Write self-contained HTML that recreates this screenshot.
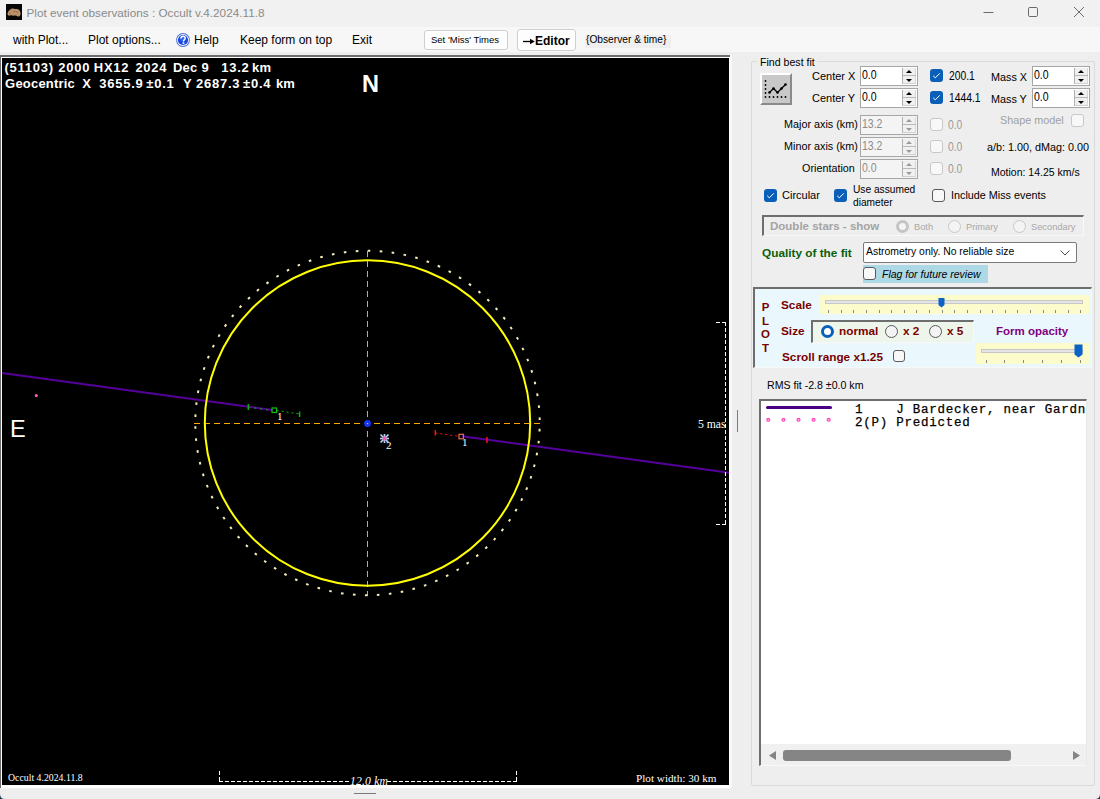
<!DOCTYPE html>
<html><head><meta charset="utf-8">
<style>
*{margin:0;padding:0;box-sizing:border-box}
html,body{width:1100px;height:799px;overflow:hidden;background:#eeeeee;font-family:"Liberation Sans",sans-serif;position:relative}
.a{position:absolute;white-space:pre;line-height:1}
#title{left:0;top:0;width:1100px;height:27px;background:#f1f1f1}
#menu{left:0;top:27px;width:1100px;height:25px;background:#f7f7f7}
.mi{font-size:12px;color:#000;top:33.5px}
.btn{background:#fdfdfd;border:1px solid #cfcfcf;border-radius:3px}
#plot{left:0;top:55px;width:732px;height:733px;background:#fff;border-top:2px solid #6d6d6d;border-left:1px solid #6d6d6d}
#blk{left:2px;top:58px;width:727px;height:727px;background:#000}
.hd{font-size:13px;font-weight:bold;color:#fff}
.sf{font-family:"Liberation Serif",serif;color:#fff}
.ps{font-size:11px;color:#000}
.sp{border:1px solid #a6a6a6}
.spb{width:14px;height:16px;background:#f0f0f0;border-left:1px solid #b0b0b0;border-right:1px solid #d8d8d8;border-bottom:1px solid #d0d0d0}
.spb:after{content:"";position:absolute;left:0;top:7px;width:13px;height:1px;background:#b8b8b8}
.tri-u{width:0;height:0;border-left:3.5px solid transparent;border-right:3.5px solid transparent;border-bottom:3.5px solid #000}
.tri-d{width:0;height:0;border-left:3.5px solid transparent;border-right:3.5px solid transparent;border-top:3.5px solid #000}
.ck{width:13px;height:13px;background:#0a5fb8;border-radius:3px}
.ck svg{position:absolute;left:0;top:0}
.cku{width:13px;height:13px;background:#f8f8f8;border:1px solid #5a5a5a;border-radius:3px}
.rad{width:13px;height:13px;border-radius:50%}
</style></head><body>
<div class="a" id="title"></div>
<div class="a" id="menu"></div>
<svg class="a" style="left:975px;top:0" width="125" height="27">
 <path d="M8.5,12.5 H18.5" stroke="#6a6a6a" stroke-width="1"/>
 <rect x="53.5" y="7.5" width="9" height="9" rx="1.2" fill="none" stroke="#6a6a6a" stroke-width="1"/>
 <path d="M99,7 L109,17 M109,7 L99,17" stroke="#6a6a6a" stroke-width="1"/>
</svg>
<svg class="a" style="left:6px;top:4px" width="16" height="16" viewBox="0 0 16 16"><rect width="16" height="16" fill="#080604"/>
<path d="M1.5,9.5 C2,7 4,5.5 6,4.5 C7.5,4 8.5,5.5 10,5 C12,4.5 14,6 14.5,8.5 C15,10.5 14,12.5 12.5,12.5 C11,12.5 10.5,11 9,11.5 C7,12 5.5,11 4,11.5 C2.5,12 1.3,11 1.5,9.5 Z" fill="#b49468"/>
<circle cx="8.5" cy="7.5" r="0.8" fill="#c05050"/><circle cx="11" cy="8" r="0.8" fill="#c05050"/><circle cx="4" cy="9.5" r="0.8" fill="#c06050"/></svg>
<svg class="a" style="left:176px;top:33px" width="14" height="14" viewBox="0 0 14 14"><circle cx="7" cy="7" r="6.9" fill="#4a68d8"/><circle cx="7" cy="7" r="6.0" fill="#f4f8ff"/><circle cx="7" cy="7" r="5.1" fill="#1846e0"/><circle cx="6" cy="5.5" r="2.5" fill="#3a70ff" opacity="0.6"/>
<path d="M4.9,5.4 C4.9,4 5.9,3.3 7.1,3.3 C8.3,3.3 9.2,4.1 9.2,5.2 C9.2,6.6 7.4,6.8 7.4,8.4" fill="none" stroke="#fff" stroke-width="1.5"/><rect x="6.6" y="9.3" width="1.7" height="1.6" fill="#fff"/></svg>
<div class="a" style="left:26.5px;top:6.5px;font-size:11.75px;color:#8a8a8a">Plot event observations : Occult v.4.2024.11.8</div>
<div class="a mi" style="left:13px">with Plot...</div>
<div class="a mi" style="left:88px">Plot options...</div>
<div class="a mi" style="left:194px">Help</div>
<div class="a mi" style="left:240px">Keep form on top</div>
<div class="a mi" style="left:352px">Exit</div>
<div class="a btn" style="left:424px;top:30px;width:84px;height:20px"></div>
<div class="a" style="left:431px;top:35px;font-size:9.5px">Set 'Miss' Times</div>
<div class="a btn" style="left:517px;top:29px;width:59px;height:22px"></div>
<svg class="a" style="left:523px;top:38px" width="13" height="7"><path d="M0,3.5 H10" stroke="#000" stroke-width="1.3"/><path d="M7,0.8 L11.8,3.5 L7,6.2 Z" fill="#000"/></svg><div class="a" style="left:535px;top:35px;font-size:12px;font-weight:bold">Editor</div>
<div class="a" style="left:585px;top:35px;width:86px;height:13px;background:#efefef"></div><div class="a" style="left:586px;top:35px;font-size:10.2px">{Observer &amp; time}</div>

<div class="a" id="plot"></div>
<div class="a" id="blk"></div>
<svg class="a" style="left:0;top:0" width="1100" height="799" viewBox="0 0 1100 799">
 <g shape-rendering="crispEdges">
  <line x1="194" y1="423.5" x2="540" y2="423.5" stroke="#ffa500" stroke-width="1.5" stroke-dasharray="6 4"/>
  <line x1="367.5" y1="251" x2="367.5" y2="596" stroke="#ffa500" stroke-width="1.5" stroke-dasharray="5.5 4.5"/>
 </g>
 <circle cx="367.5" cy="423" r="172.2" fill="none" stroke="#f4ecb8" stroke-width="2" stroke-dasharray="2.6 9.422" stroke-dashoffset="-5.9"/>
 <line x1="2" y1="372.9" x2="273" y2="410.2" stroke="#56009c" stroke-width="2"/>
 <line x1="462" y1="436.2" x2="729" y2="472.8" stroke="#56009c" stroke-width="2"/>
 <circle cx="367.5" cy="423" r="162.7" fill="none" stroke="#ffff00" stroke-width="2"/>
  <circle cx="367.5" cy="423.5" r="3.4" fill="#1434ff"/><circle cx="367.5" cy="423.5" r="0.8" fill="#ffa500"/>
 <circle cx="36.3" cy="395.6" r="1.5" fill="#ff60c0"/>
 <!-- green -->
 <line x1="248.3" y1="404" x2="248.3" y2="410" stroke="#10b010" stroke-width="1.5"/>
 <line x1="299.6" y1="411.5" x2="299.6" y2="417" stroke="#10b010" stroke-width="1.5"/>
 <line x1="276.7" y1="410.5" x2="299.6" y2="414" stroke="#10b010" stroke-width="1" stroke-dasharray="2 3"/>
 <line x1="248.3" y1="407" x2="272" y2="410.3" stroke="#10a010" stroke-width="1.2" stroke-dasharray="2 4"/>
 <rect x="272" y="408" width="4.5" height="4.5" fill="none" stroke="#10c010" stroke-width="1.2"/>
 <!-- red -->
 <line x1="435.3" y1="430" x2="435.3" y2="435.6" stroke="#ff1010" stroke-width="1.5"/>
 <line x1="487" y1="437" x2="487" y2="443" stroke="#ff1010" stroke-width="1.5"/>
 <line x1="435.3" y1="433" x2="458.5" y2="436.3" stroke="#ff1010" stroke-width="1" stroke-dasharray="2 3"/>
 <rect x="459" y="434.3" width="4.5" height="4.5" fill="none" stroke="#e07050" stroke-width="1.2"/>
 <!-- star -->
 <g stroke="#b8d0f0" stroke-width="1.7">
  <line x1="380.5" y1="434.5" x2="388.5" y2="442.5"/><line x1="388.5" y1="434.5" x2="380.5" y2="442.5"/>
  <line x1="384.5" y1="434" x2="384.5" y2="443"/><line x1="380" y1="438.5" x2="389" y2="438.5"/>
 </g>
 <circle cx="384.5" cy="438.5" r="1.9" fill="#ff50b0"/>
 <!-- right bracket -->
 <g stroke="#fff" stroke-width="1" shape-rendering="crispEdges">
  <line x1="725.5" y1="322" x2="725.5" y2="525" stroke-dasharray="4 2"/>
  <line x1="716" y1="322.5" x2="726" y2="322.5" stroke-dasharray="4 2"/>
  <line x1="716" y1="524.5" x2="726" y2="524.5" stroke-dasharray="4 2"/>
  <line x1="219.5" y1="771" x2="219.5" y2="782" stroke-dasharray="4 2"/>
  <line x1="516.5" y1="771" x2="516.5" y2="782" stroke-dasharray="4 2"/>
  <line x1="219" y1="781.5" x2="350" y2="781.5" stroke-dasharray="4 2"/>
  <line x1="387" y1="781.5" x2="517" y2="781.5" stroke-dasharray="4 2"/>
 </g>
</svg>
<div class="a hd" style="left:4.5px;top:61px;letter-spacing:0.75px">(51103)</div><div class="a hd" style="left:58.3px;top:61px;letter-spacing:0.75px">2000</div><div class="a hd" style="left:93.8px;top:61px;letter-spacing:0.75px">HX12</div><div class="a hd" style="left:135.4px;top:61px;letter-spacing:0.75px">2024</div><div class="a hd" style="left:172.9px;top:61px;letter-spacing:0.2px">Dec</div><div class="a hd" style="left:201.5px;top:61px;letter-spacing:0.75px">9</div><div class="a hd" style="left:221.3px;top:61px;letter-spacing:0.75px">13.2</div><div class="a hd" style="left:252.0px;top:61px;letter-spacing:0.2px">km</div>

<div class="a hd" style="left:5.1px;top:77px;letter-spacing:0.2px">Geocentric</div><div class="a hd" style="left:82.2px;top:77px;letter-spacing:0.2px">X</div><div class="a hd" style="left:99.3px;top:77px;letter-spacing:0.75px">3655.9</div><div class="a hd" style="left:146.3px;top:77px;letter-spacing:0.75px">±0.1</div><div class="a hd" style="left:183.1px;top:77px;letter-spacing:0.2px">Y</div><div class="a hd" style="left:196.0px;top:77px;letter-spacing:0.75px">2687.3</div><div class="a hd" style="left:243.1px;top:77px;letter-spacing:0.75px">±0.4</div><div class="a hd" style="left:275.9px;top:77px;letter-spacing:0.2px">km</div>

<div class="a" style="left:362px;top:73px;font-size:23.5px;font-weight:bold;color:#fff">N</div>
<div class="a" style="left:10px;top:418px;font-size:23.5px;color:#fff">E</div>
<div class="a sf" style="left:277px;top:411px;font-size:11px">1</div>
<div class="a sf" style="left:462px;top:437px;font-size:11px">1</div>
<div class="a sf" style="left:386px;top:440px;font-size:11px">2</div>
<div class="a sf" style="left:698px;top:418.5px;font-size:11.7px">5 mas</div>
<div class="a sf" style="left:8px;top:773px;font-size:9.8px">Occult 4.2024.11.8</div>
<div class="a sf" style="left:636px;top:773px;font-size:11.2px">Plot width: 30 km</div>
<div class="a sf" style="left:350px;top:775.5px;font-size:11.6px;font-style:italic;letter-spacing:0.2px">12.0 km</div>

<!-- splitter grippers -->
<div class="a" style="left:737px;top:410px;width:1px;height:22px;background:#7a7a7a"></div>
<div class="a" style="left:354px;top:793px;width:22px;height:1px;background:#7a7a7a"></div>
<div class="a" style="left:730px;top:55px;width:2px;height:733px;background:#f8f8f8"></div>
<!-- outer frame -->
<div class="a" style="left:751px;top:61px;width:344px;height:725px;border:1px solid #dadada;border-radius:2px"></div>
<div class="a" style="left:757px;top:56px;width:60px;height:10px;background:#eeeeee"></div>
<div class="a ps" style="left:760px;top:57px;font-size:10.6px">Find best fit</div>
<!-- fit button -->
<div class="a" style="left:760px;top:73px;width:32px;height:32px;background:#c8c8c8;border:2px solid;border-color:#fff #8a8a8a #8a8a8a #fff"></div>
<svg class="a" style="left:760px;top:73px" width="32" height="32" viewBox="0 0 32 32">
 <g fill="#000"><circle cx="5.5" cy="8" r="0.9"/><circle cx="5.5" cy="12" r="0.9"/><circle cx="5.5" cy="16" r="0.9"/><circle cx="5.5" cy="20" r="0.9"/><circle cx="5.5" cy="24" r="0.9"/>
 <circle cx="9.5" cy="24" r="0.9"/><circle cx="13.5" cy="24" r="0.9"/><circle cx="17.5" cy="24" r="0.9"/><circle cx="21.5" cy="24" r="0.9"/><circle cx="25.5" cy="24" r="0.9"/></g>
 <polyline points="9.5,19.5 13.5,15.5 17.5,19.5 21.5,15.5 25.5,11.5" fill="none" stroke="#000" stroke-width="1.3"/>
 <g fill="#000"><circle cx="9.5" cy="19.5" r="1.3"/><circle cx="13.5" cy="15.5" r="1.3"/><circle cx="17.5" cy="19.5" r="1.3"/><circle cx="21.5" cy="15.5" r="1.3"/><circle cx="25.5" cy="11.5" r="1.3"/></g>
</svg>
<div class="a ps" style="left:812px;top:71px;font-size:11px">Center X</div>
<div class="a ps" style="left:812px;top:93px;font-size:11px">Center Y</div>
<div class="a ps" style="left:784px;top:119px;font-size:10.8px">Major axis (km)</div>
<div class="a ps" style="left:784px;top:141px;font-size:10.8px">Minor axis (km)</div>
<div class="a ps" style="left:802px;top:163px;font-size:10.8px">Orientation</div>
<div class="a sp" style="left:860px;top:66px;width:58px;height:20px;background:#fff"></div><div class="a" style="left:862px;top:69px;font-size:12.5px;transform:scaleX(0.84);transform-origin:0 0;color:#000">0.0</div><div class="a spb" style="left:902px;top:68px"></div><div class="a tri-u" style="left:906px;top:70px"></div><div class="a tri-d" style="left:906px;top:79px"></div>
<div class="a sp" style="left:1032px;top:66px;width:58px;height:20px;background:#fff"></div><div class="a" style="left:1034px;top:69px;font-size:12.5px;transform:scaleX(0.84);transform-origin:0 0;color:#000">0.0</div><div class="a spb" style="left:1074px;top:68px"></div><div class="a tri-u" style="left:1078px;top:70px"></div><div class="a tri-d" style="left:1078px;top:79px"></div>
<div class="a sp" style="left:860px;top:88px;width:58px;height:20px;background:#fff"></div><div class="a" style="left:862px;top:91px;font-size:12.5px;transform:scaleX(0.84);transform-origin:0 0;color:#000">0.0</div><div class="a spb" style="left:902px;top:90px"></div><div class="a tri-u" style="left:906px;top:92px"></div><div class="a tri-d" style="left:906px;top:101px"></div>
<div class="a sp" style="left:1032px;top:88px;width:58px;height:20px;background:#fff"></div><div class="a" style="left:1034px;top:91px;font-size:12.5px;transform:scaleX(0.84);transform-origin:0 0;color:#000">0.0</div><div class="a spb" style="left:1074px;top:90px"></div><div class="a tri-u" style="left:1078px;top:92px"></div><div class="a tri-d" style="left:1078px;top:101px"></div>
<div class="a sp" style="left:860px;top:115px;width:58px;height:20px;background:#f4f4f4"></div><div class="a" style="left:862px;top:118px;font-size:12.5px;transform:scaleX(0.84);transform-origin:0 0;color:#8c8c8c">13.2</div><div class="a spb" style="left:902px;top:117px"></div><div class="a tri-u" style="border-bottom-color:#9a9a9a;left:906px;top:119px"></div><div class="a tri-d" style="border-top-color:#9a9a9a;left:906px;top:128px"></div>
<div class="a sp" style="left:860px;top:137px;width:58px;height:20px;background:#f4f4f4"></div><div class="a" style="left:862px;top:140px;font-size:12.5px;transform:scaleX(0.84);transform-origin:0 0;color:#8c8c8c">13.2</div><div class="a spb" style="left:902px;top:139px"></div><div class="a tri-u" style="border-bottom-color:#9a9a9a;left:906px;top:141px"></div><div class="a tri-d" style="border-top-color:#9a9a9a;left:906px;top:150px"></div>
<div class="a sp" style="left:860px;top:159px;width:58px;height:20px;background:#f4f4f4"></div><div class="a" style="left:862px;top:162px;font-size:12.5px;transform:scaleX(0.84);transform-origin:0 0;color:#8c8c8c">0.0</div><div class="a spb" style="left:902px;top:161px"></div><div class="a tri-u" style="border-bottom-color:#9a9a9a;left:906px;top:163px"></div><div class="a tri-d" style="border-top-color:#9a9a9a;left:906px;top:172px"></div>
<div class="a ck" style="left:930px;top:69px"><svg width="13" height="13" viewBox="0 0 13 13"><polyline points="3.2,6.8 5.3,8.8 9.8,4.3" fill="none" stroke="#fff" stroke-width="1"/></svg></div>
<div class="a ck" style="left:930px;top:91px"><svg width="13" height="13" viewBox="0 0 13 13"><polyline points="3.2,6.8 5.3,8.8 9.8,4.3" fill="none" stroke="#fff" stroke-width="1"/></svg></div>
<div class="a" style="left:949px;top:70px;font-size:12.3px;transform:scaleX(0.84);transform-origin:0 0">200.1</div>
<div class="a" style="left:949px;top:92px;font-size:12.3px;transform:scaleX(0.84);transform-origin:0 0">1444.1</div>
<div class="a ps" style="left:991px;top:72px;font-size:10.8px">Mass X</div>
<div class="a ps" style="left:991px;top:94px;font-size:10.8px">Mass Y</div>
<div class="a cku" style="left:930px;top:118px;border-color:#c8c8c8"></div>
<div class="a" style="left:948px;top:119px;font-size:12.3px;transform:scaleX(0.84);transform-origin:0 0;color:#9a9a9a">0.0</div>
<div class="a cku" style="left:930px;top:140px;border-color:#c8c8c8"></div>
<div class="a" style="left:948px;top:141px;font-size:12.3px;transform:scaleX(0.84);transform-origin:0 0;color:#9a9a9a">0.0</div>
<div class="a cku" style="left:930px;top:162px;border-color:#c8c8c8"></div>
<div class="a" style="left:948px;top:163px;font-size:12.3px;transform:scaleX(0.84);transform-origin:0 0;color:#9a9a9a">0.0</div>
<div class="a ps" style="left:1000px;top:115px;font-size:10.8px;color:#a0a0a0">Shape model</div>
<div class="a cku" style="left:1071px;top:114px;border-color:#c8c8c8"></div>
<div class="a ps" style="left:987px;top:142px;font-size:10.8px">a/b: 1.00, dMag: 0.00</div>
<div class="a ps" style="left:991px;top:167px;font-size:10.5px">Motion: 14.25 km/s</div>
<div class="a ck" style="left:764px;top:189px"><svg width="13" height="13" viewBox="0 0 13 13"><polyline points="3.2,6.8 5.3,8.8 9.8,4.3" fill="none" stroke="#fff" stroke-width="1"/></svg></div>
<div class="a ck" style="left:834px;top:189px"><svg width="13" height="13" viewBox="0 0 13 13"><polyline points="3.2,6.8 5.3,8.8 9.8,4.3" fill="none" stroke="#fff" stroke-width="1"/></svg></div>
<div class="a cku" style="left:932px;top:189px;border-color:#5a5a5a"></div>
<div class="a ps" style="left:782px;top:190px;font-size:11px">Circular</div>
<div class="a ps" style="left:853px;top:185px;font-size:10.2px">Use assumed</div>
<div class="a ps" style="left:853px;top:198px;font-size:10.2px">diameter</div>
<div class="a ps" style="left:951px;top:190px;font-size:10.8px">Include Miss events</div>
<div class="a" style="left:762px;top:215px;width:322px;height:21px;border:2px solid;border-color:#6e6e6e #f8f8f8 #f8f8f8 #6e6e6e;border-width:2px 1px 1px 2px"></div>
<div class="a" style="left:770px;top:221px;font-size:11.5px;font-weight:bold;color:#a4a4a4">Double stars - show</div>
<div class="a rad" style="left:896px;top:220px;border:3.5px solid #c4c4c4;background:#f4f4f4"></div>
<div class="a rad" style="left:948px;top:220px;border:1px solid #c8c8c8;background:#f4f4f4"></div>
<div class="a rad" style="left:1013px;top:220px;border:1px solid #c8c8c8;background:#f4f4f4"></div>
<div class="a" style="left:914px;top:223px;font-size:9.3px;color:#a8a8a8">Both</div>
<div class="a" style="left:966px;top:223px;font-size:9.3px;color:#a8a8a8">Primary</div>
<div class="a" style="left:1031px;top:223px;font-size:9.3px;color:#a8a8a8">Secondary</div>
<div class="a" style="left:762px;top:248px;font-size:11.8px;font-weight:bold;color:#0a5e0a">Quality of the fit</div>
<div class="a" style="left:863px;top:242px;width:214px;height:21px;background:#fff;border:1px solid #7a7a7a;border-radius:2px"></div>
<div class="a ps" style="left:866px;top:247px;font-size:10.4px">Astrometry only. No reliable size</div>
<svg class="a" style="left:1060px;top:249px" width="11" height="8"><polyline points="0.5,1.5 5,6 9.5,1.5" fill="none" stroke="#505050" stroke-width="1"/></svg>
<div class="a" style="left:863px;top:265px;width:125px;height:18px;background:#add8e6"></div>
<div class="a cku" style="left:863px;top:267px;border-color:#5a5a5a"></div>
<div class="a ps" style="left:882px;top:269px;font-size:10.5px;font-style:italic">Flag for future review</div>

<!-- PLOT panel -->
<div class="a" style="left:753px;top:287px;width:339px;height:81px;background:#eaf8fd;border-style:solid;border-color:#6e6e6e #f8f8f8 #f8f8f8 #6e6e6e;border-width:2px 1px 1px 2px"></div>
<div class="a" style="left:761px;top:301px;font-size:11.5px;font-weight:bold;color:#7a0000;line-height:13.5px;text-align:center;width:9px;white-space:normal">P<br>L<br>O<br>T</div>
<div class="a" style="left:781px;top:299.5px;font-size:11.8px;font-weight:bold;color:#7a0000">Scale</div>
<div class="a" style="left:820px;top:295px;width:269px;height:19px;background:#fcfbcb"></div>
<div class="a" style="left:825px;top:300px;width:258px;height:4px;background:#e4e4e4;border:1px solid #c8c8c8"></div>
<svg class="a" style="left:820px;top:295px" width="269" height="19">
 <g stroke="#8a8a8a" stroke-width="1" shape-rendering="crispEdges"><line x1="8.5" y1="15" x2="8.5" y2="18"/><line x1="21.5" y1="15" x2="21.5" y2="18"/><line x1="33.5" y1="15" x2="33.5" y2="18"/><line x1="46.5" y1="15" x2="46.5" y2="18"/><line x1="59.5" y1="15" x2="59.5" y2="18"/><line x1="71.5" y1="15" x2="71.5" y2="18"/><line x1="84.5" y1="15" x2="84.5" y2="18"/><line x1="96.5" y1="15" x2="96.5" y2="18"/><line x1="109.5" y1="15" x2="109.5" y2="18"/><line x1="122.5" y1="15" x2="122.5" y2="18"/><line x1="134.5" y1="15" x2="134.5" y2="18"/><line x1="147.5" y1="15" x2="147.5" y2="18"/><line x1="160.5" y1="15" x2="160.5" y2="18"/><line x1="172.5" y1="15" x2="172.5" y2="18"/><line x1="185.5" y1="15" x2="185.5" y2="18"/><line x1="197.5" y1="15" x2="197.5" y2="18"/><line x1="210.5" y1="15" x2="210.5" y2="18"/><line x1="223.5" y1="15" x2="223.5" y2="18"/><line x1="235.5" y1="15" x2="235.5" y2="18"/><line x1="248.5" y1="15" x2="248.5" y2="18"/><line x1="260.5" y1="15" x2="260.5" y2="18"/></g>
 <path d="M118.5,3 h6 v7 l-3,2.5 l-3,-2.5 z" fill="#0a64c8"/>
</svg>
<div class="a" style="left:781px;top:326px;font-size:11.8px;font-weight:bold;color:#7a0000">Size</div>
<div class="a" style="left:811px;top:320px;width:163px;height:23px;background:#eef6ec;border-style:solid;border-color:#6e6e6e #f8f8f8 #f8f8f8 #6e6e6e;border-width:2px 1px 1px 2px"></div>
<div class="a rad" style="left:821px;top:325px;border:3.5px solid #0a5fb8;background:#fff"></div>
<div class="a" style="left:839px;top:326px;font-size:11.8px;font-weight:bold;color:#7a0000">normal</div>
<div class="a rad" style="left:885px;top:325px;border:1px solid #5a5a5a;background:#f4f4f4"></div>
<div class="a" style="left:903px;top:326px;font-size:11.8px;font-weight:bold;color:#7a0000">x 2</div>
<div class="a rad" style="left:929px;top:325px;border:1px solid #5a5a5a;background:#f4f4f4"></div>
<div class="a" style="left:947px;top:326px;font-size:11.8px;font-weight:bold;color:#7a0000">x 5</div>
<div class="a" style="left:782px;top:351.5px;font-size:11.8px;font-weight:bold;color:#7a0000">Scroll range x1.25</div>
<div class="a cku" style="left:893px;top:350px;border-color:#5a5a5a;width:12px;height:12px"></div>
<div class="a" style="left:996px;top:326px;font-size:11.5px;font-weight:bold;color:#800080">Form opacity</div>
<div class="a" style="left:976px;top:343px;width:114px;height:21px;background:#fcfbcb"></div>
<div class="a" style="left:981px;top:349px;width:102px;height:4px;background:#e4e4e4;border:1px solid #c8c8c8"></div>
<svg class="a" style="left:976px;top:343px" width="114" height="21">
 <g stroke="#8a8a8a" stroke-width="1" shape-rendering="crispEdges"><line x1="10.5" y1="17" x2="10.5" y2="20"/><line x1="28.5" y1="17" x2="28.5" y2="20"/><line x1="47.5" y1="17" x2="47.5" y2="20"/><line x1="66.5" y1="17" x2="66.5" y2="20"/><line x1="85.5" y1="17" x2="85.5" y2="20"/><line x1="104.5" y1="17" x2="104.5" y2="20"/></g>
 <path d="M98.5,1.5 h8 v10 l-4,3 l-4,-3 z" fill="#0a64c8"/>
</svg>
<!-- RMS -->
<div class="a ps" style="left:767px;top:380px;font-size:10.6px;letter-spacing:0px">RMS fit -2.8 ±0.0 km</div>
<!-- listbox -->
<div class="a" style="left:759px;top:399px;width:328px;height:367px;background:#fff;border-style:solid;border-color:#6e6e6e #e8e8e8 #f8f8f8 #6e6e6e;border-width:2px 1px 1px 2px;overflow:hidden">
 <div style="position:absolute;left:5px;top:5.1px;width:66px;height:3px;background:#4b0082;border-radius:1.5px"></div>
 <svg style="position:absolute;left:5px;top:16.3px" width="70" height="6"><g fill="#ff50c0"><circle cx="2.3" cy="2.7" r="1.5" fill="#ffa8dc" stroke="#ff40b0" stroke-width="1.1"/><circle cx="17.4" cy="2.7" r="1.5" fill="#ffa8dc" stroke="#ff40b0" stroke-width="1.1"/><circle cx="32.5" cy="2.7" r="1.5" fill="#ffa8dc" stroke="#ff40b0" stroke-width="1.1"/><circle cx="47.599999999999994" cy="2.7" r="1.5" fill="#ffa8dc" stroke="#ff40b0" stroke-width="1.1"/><circle cx="62.699999999999996" cy="2.7" r="1.5" fill="#ffa8dc" stroke="#ff40b0" stroke-width="1.1"/></g></svg>
 <div style="position:absolute;left:94px;top:3.3px;font-family:'Liberation Mono',monospace;font-size:12.5px;letter-spacing:0.75px;line-height:12.4px;-webkit-text-stroke:0.25px #000;white-space:pre;color:#000">1    J Bardecker, near Gardner
2(P) Predicted</div>
 <div style="position:absolute;left:0;top:343px;width:326px;height:22px;background:#f0f0f0"></div>
 <svg style="position:absolute;left:0;top:344px" width="326" height="21">
  <path d="M8,10.5 L15,6 L15,15 Z" fill="#858585"/>
  <rect x="22" y="5" width="228" height="11" rx="3" fill="#858585"/>
  <path d="M319,10.5 L312,6 L312,15 Z" fill="#858585"/>
 </svg>
</div>
<svg class="a" style="left:0;top:793px" width="6" height="6"><path d="M0,1 Q0,6 5,6 L0,6 Z" fill="#1a3a48"/></svg>
<svg class="a" style="left:1094px;top:793px" width="6" height="6"><path d="M6,1 Q6,6 1,6 L6,6 Z" fill="#1a3a48"/></svg>
</body></html>
